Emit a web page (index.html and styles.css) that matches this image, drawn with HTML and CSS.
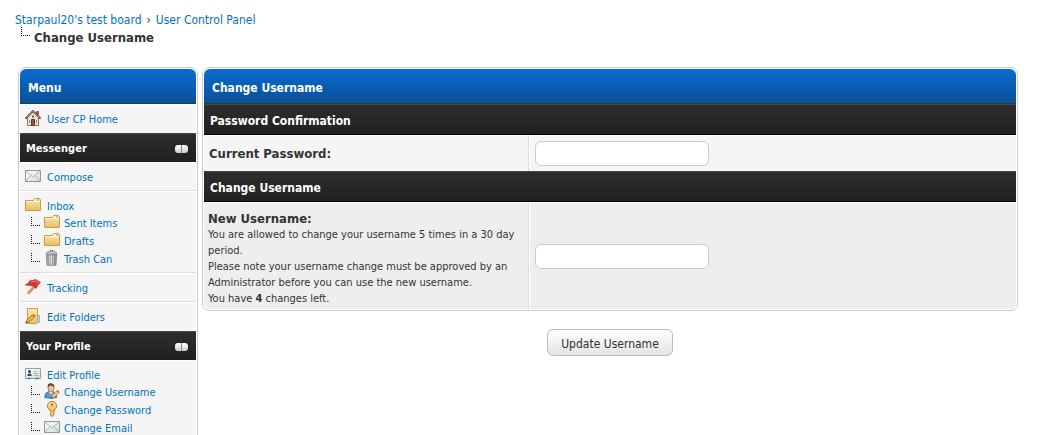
FILE: index.html
```html
<!DOCTYPE html>
<html lang="en">
<head>
<meta charset="utf-8">
<meta name="viewport" content="width=device-width, initial-scale=1">
<title>Change Username</title>
<link rel="stylesheet" href="styles.css">
</head>
<body>
<svg class="sprites" aria-hidden="true">
  <defs>
    <linearGradient id="gold" x1="0" y1="0" x2="0" y2="1"><stop offset="0" stop-color="#fbeab0"/><stop offset="1" stop-color="#e8bf63"/></linearGradient>
    <linearGradient id="steel" x1="0" y1="0" x2="1" y2="0"><stop offset="0" stop-color="#999"/><stop offset=".45" stop-color="#e2e2e2"/><stop offset="1" stop-color="#888"/></linearGradient>
    <linearGradient id="paper" x1="0" y1="0" x2="1" y2="1"><stop offset="0" stop-color="#fff"/><stop offset="1" stop-color="#cfdcdc"/></linearGradient>
    <symbol id="tree" viewBox="0 0 9 9">
      <path d="M.5 0V9M2 8.500H9" fill="none" stroke="#111" stroke-dasharray="1 1"/>
    </symbol>
    <symbol id="folder" viewBox="0 0 16 16">
      <path d="M.5 3.500h8l1-2h5l1 1.500v10.500h-15z" fill="url(#gold)" stroke="#c79c50"/>
      <path d="M9.500 2.500h5v1h-5z" fill="#fff"/><path d="M12 2.500h2v1h-2z" fill="#39a9d8"/>
      <path d="M1.500 4.500h13" stroke="#fff6d2"/>
    </symbol>
    <symbol id="mail" viewBox="0 0 16 16">
      <path d="M.5 2.500h15v11H.5z" fill="url(#paper)" stroke="#8d9b9c"/>
      <path d="M1 3l7 6 7-6M1 13l5-5.500M15 13l-5-5.500" fill="none" stroke="#97a7a8" stroke-width=".8"/>
    </symbol>
    <symbol id="house" viewBox="0 0 16 16">
      <path d="M2.500 7.500L8 2l5.500 5.500v8h-11z" fill="#efe3d2" stroke="#897664"/>
      <path d="M11.500 1.500h2v4l-2-2z" fill="#c5543b" stroke="#6f4638" stroke-width=".7"/>
      <path d="M.5 8.500L8 1l7.500 7.500" fill="none" stroke="#5b4639" stroke-width="1.800"/>
      <path d="M1.500 7.500L8 1.300l6.500 6.200" fill="none" stroke="#d5b5a0" stroke-width=".8"/>
      <path d="M6.500 9.500h3v6h-3z" fill="#a9542c" stroke="#613522"/>
      <path d="M7 5.500h2v2H7z" fill="#665b55"/><path d="M11 10h1v3h-1zM4 10h1v3H4z" fill="#9b8b79"/>
    </symbol>
    <symbol id="trash" viewBox="0 0 16 16">
      <path d="M2.500 4h10l-.5 11q-4.500 1-9 0z" fill="url(#steel)" stroke="#888"/>
      <path d="M4.500 5v10M6.500 5v10M8.500 5v10M10.500 5v10" stroke="#777" stroke-width=".8" stroke-dasharray="1.200 .9"/>
      <path d="M2 4q0-2.500 5.500-2.500T13 4z" fill="#ccc" stroke="#888" stroke-width=".8"/>
      <path d="M6 1.500V.5h3v1" fill="none" stroke="#888"/>
    </symbol>
    <symbol id="flag" viewBox="0 0 16 16">
      <path d="M11.500 5L3 14.500" stroke="#8e6534" stroke-width="2.600"/>
      <path d="M11.200 5L3.200 14" stroke="#dfb67b" stroke-width="1.200"/>
      <path d="M5.500 1.200q2.500 1 5-.7l5 3q-2.500 1.500-4.500 6Q8.500 6.500 5.500 6.500L.5 6q3.500-2 5-4.800z" fill="#dc3434" stroke="#b22727" stroke-width=".7"/>
      <path d="M5.800 2.200q2.700 1 4.700-.2l3.500 2" fill="none" stroke="#f37a73"/>
    </symbol>
    <symbol id="notebook" viewBox="0 0 16 16">
      <path d="M11 7.500h3.500v7H11z" fill="#dcebf0" stroke="#8eb0bc"/>
      <path d="M2.500.5h10v14l-1 1h-9z" fill="url(#gold)" stroke="#c79c50"/>
      <path d="M1 15l1-3 5.500-5 2 2L4 14z" fill="#f1c242" stroke="#7c5526" stroke-width=".8"/>
      <path d="M7.500 7l1-1 2 2-1 1z" fill="#d85a51"/><path d="M.5 15.500l.8-2 1.200 1.200z" fill="#222"/>
    </symbol>
    <symbol id="card" viewBox="0 0 16 16">
      <path d="M.5 2.500h15v10H.5z" fill="url(#paper)" stroke="#92a1aa"/>
      <circle cx="4.500" cy="5.500" r="1.500" fill="#30435d"/><path d="M2.500 10V8.500q2-2 4 0V10z" fill="#30435d"/>
      <path d="M8.500 5.500h3M8.500 7.500h5M8.500 9.500h5" stroke="#a6b5bd"/>
      <path d="M2.500 12.500h3M10.500 12.500h3" stroke="#5e7180" stroke-width="1.500"/>
    </symbol>
    <symbol id="person" viewBox="0 0 16 16">
      <path d="M.7 14.500q0-5 4-6h4q4 1 4 6-6 1.500-12 0z" fill="#5b9ad2" stroke="#2d6499" stroke-width=".8"/>
      <path d="M5 8.500l2 3 2-3z" fill="#fff"/>
      <ellipse cx="7" cy="5" rx="3" ry="4" fill="#f0bd8e" stroke="#9a6538" stroke-width=".7"/>
      <path d="M3.800 4.500Q3 0 7 .3T10.200 4.500Q9 2.500 7 2.500T3.800 4.500z" fill="#5f4535"/>
      <path d="M7 15.500l1-3 5-5 2 2-5 5z" fill="#f7d06c" stroke="#9a6b36" stroke-width=".7"/>
      <path d="M12.500 8l1-1 2 2-1 1z" fill="#d9534c"/><path d="M7 15.500l.6-1.800 1.200 1.200z" fill="#222"/>
    </symbol>
    <symbol id="key" viewBox="0 0 16 16">
      <path d="M6.500 8v6.500l1.500 1 1.500-1.200V13l1-.8-1-1.200 1-1V8z" fill="#e5b64c" stroke="#a97829" stroke-width=".8"/>
      <circle cx="8" cy="5" r="4.600" fill="#f0cb6c" stroke="#a97829" stroke-width=".9"/>
      <path d="M5 5q0-3 3-3t3 3" fill="none" stroke="#fff2bd"/><circle cx="8" cy="3.500" r="1.100" fill="#8c6427"/>
      <path d="M8 8v6" stroke="#fae2a0"/>
    </symbol>
  </defs>
</svg>
<div class="page">
  <nav class="crumbs" aria-label="Breadcrumb">
    <div class="trail"><a href="#">Starpaul20's test board</a><span>›</span><a href="#">User Control Panel</a></div>
    <div class="current"><svg class="branch"><use href="#tree"/></svg><strong>Change Username</strong></div>
  </nav>
  <div class="columns">
    <nav class="panel" aria-label="Menu">
      <div class="head">Menu</div>
      <div class="group"><a class="item" href="#"><svg class="icon"><use href="#house"/></svg>User CP Home</a></div>
      <div class="bar">Messenger<button class="toggle" type="button" aria-label="Collapse Messenger"></button></div>
      <div class="group"><a class="item" href="#"><svg class="icon"><use href="#mail"/></svg>Compose</a></div>
      <div class="group nested">
        <a class="item" href="#"><svg class="icon"><use href="#folder"/></svg>Inbox</a>
        <a class="item sub" href="#"><svg class="branch"><use href="#tree"/></svg><svg class="icon"><use href="#folder"/></svg>Sent Items</a>
        <a class="item sub" href="#"><svg class="branch"><use href="#tree"/></svg><svg class="icon"><use href="#folder"/></svg>Drafts</a>
        <a class="item sub" href="#"><svg class="branch"><use href="#tree"/></svg><svg class="icon"><use href="#trash"/></svg>Trash Can</a>
      </div>
      <div class="group"><a class="item" href="#"><svg class="icon"><use href="#flag"/></svg>Tracking</a></div>
      <div class="group"><a class="item" href="#"><svg class="icon"><use href="#notebook"/></svg>Edit Folders</a></div>
      <div class="bar">Your Profile<button class="toggle" type="button" aria-label="Collapse Your Profile"></button></div>
      <div class="group nested">
        <a class="item" href="#"><svg class="icon"><use href="#card"/></svg>Edit Profile</a>
        <a class="item sub" href="#"><svg class="branch"><use href="#tree"/></svg><svg class="icon"><use href="#person"/></svg>Change Username</a>
        <a class="item sub" href="#"><svg class="branch"><use href="#tree"/></svg><svg class="icon"><use href="#key"/></svg>Change Password</a>
        <a class="item sub" href="#"><svg class="branch"><use href="#tree"/></svg><svg class="icon"><use href="#mail"/></svg>Change Email</a>
      </div>
    </nav>
    <form class="main">
      <div class="panel">
        <div class="head">Change Username</div>
        <div class="bar section">Password Confirmation</div>
        <div class="row">
          <div class="cell"><label for="password">Current Password:</label></div>
          <div class="cell"><input id="password" type="password"></div>
        </div>
        <div class="bar section">Change Username</div>
        <div class="row alt">
          <div class="cell">
            <label for="username">New Username:</label>
            <p class="note">You are allowed to change your username 5 times in a 30 day period.<br>Please note your username change must be approved by an Administrator before you can use the new username.<br>You have <strong>4</strong> changes left.</p>
          </div>
          <div class="cell"><input id="username" type="text"></div>
        </div>
      </div>
      <button class="submit" type="submit">Update Username</button>
    </form>
  </div>
</div>
</body>
</html>
```
FILE: styles.css
```css
* { box-sizing: border-box; }
body {
  margin: 0;
  background: #fff;
  color: #333;
  font: 13px/18px "DejaVu Sans Condensed", "DejaVu Sans", sans-serif;
}
a { color: #0072bc; text-decoration: none; }
.sprites { position: absolute; width: 0; height: 0; }
.page { height: 100vh; overflow: hidden; padding: 11px 20px 0 15px; }
.trail { display: flex; gap: 5px; font-size: 12px; }
.current { display: flex; gap: 4px; padding-left: 6px; }
.branch { flex: none; width: 9px; height: 9px; }
.current .branch { margin-top: -2px; }
.columns {
  display: grid;
  grid-template-columns: 180px minmax(0, 1fr);
  align-items: start;
  gap: 4px;
  padding: 20px 0 0 3px;
}
.panel { padding: 1px; border: 1px solid #ccc; border-radius: 7px; background: #fff; }
.head {
  height: 35px;
  padding: 0 8px;
  border-bottom: 1px solid #263c30;
  border-radius: 6px 6px 0 0;
  background: linear-gradient(#0b6bcf, #0a509a);
  color: #fff;
  font-size: 12px;
  font-weight: bold;
  line-height: 38px;
}
.bar {
  display: flex;
  align-items: center;
  justify-content: space-between;
  height: 29px;
  padding: 1px 8px 0 6px;
  border-top: 1px solid #444;
  background: linear-gradient(#2e2e2e, #202020);
  color: #fff;
  font-size: 11px;
  font-weight: bold;
}
.section { height: 31px; padding-top: 2px; border-bottom: 1px solid #000; font-size: 12px; }
.toggle {
  width: 13px;
  height: 8px;
  padding: 0;
  border: 0;
  border-radius: 3px;
  background: linear-gradient(90deg, transparent 6px, #888 6px, #888 7px, transparent 7px), linear-gradient(#fff, #ccc);
}
.group {
  padding: 5px;
  border-top: 1px solid #fff;
  border-bottom: 1px solid #ddd;
  background: #f5f5f5;
  font-size: 11px;
  line-height: 20px;
}
.nested { padding-bottom: 4px; }
.group:has(+ .bar) { border-bottom-color: #f5f5f5; border-radius: 0 0 6px 6px; }
.item { display: flex; align-items: flex-start; gap: 6px; height: 17px; }
.item + .item { height: 18px; }
.icon { flex: none; width: 16px; height: 16px; }
.sub { gap: 4px; padding-left: 6px; }
.sub .branch { margin-top: 3px; }
.row { display: grid; grid-template-columns: 2fr 3fr; background: #f5f5f5; }
.alt { background: #eee; border-radius: 0 0 6px 6px; }
.cell { display: flex; flex-direction: column; justify-content: center; padding: 5px; border-top: 1px solid #fff; }
.cell:first-child { border-right: 1px solid #ddd; }
.cell + .cell { border-left: 1px solid #fff; }
.cell label { font-weight: bold; }
.row:not(.alt) label { padding-top: 1px; }
.alt label { line-height: 16px; }
.alt .cell:first-child { padding: 8px 4px 2px; }
.note { margin: 0; font-size: 11px; line-height: 16px; }
.cell input {
  width: 174px;
  height: 25px;
  padding: 3px 6px;
  border: 1px solid #ccc;
  border-radius: 6px;
  background: #fff;
  font: inherit;
}
.submit {
  display: block;
  height: 27px;
  margin: 18px auto 0;
  padding: 2px 13px 0;
  border: 1px solid #bbb;
  border-radius: 6px;
  background: linear-gradient(#fff, #e4e4e4);
  color: #333;
  font: 12px "DejaVu Sans Condensed", "DejaVu Sans", sans-serif;
}
```
